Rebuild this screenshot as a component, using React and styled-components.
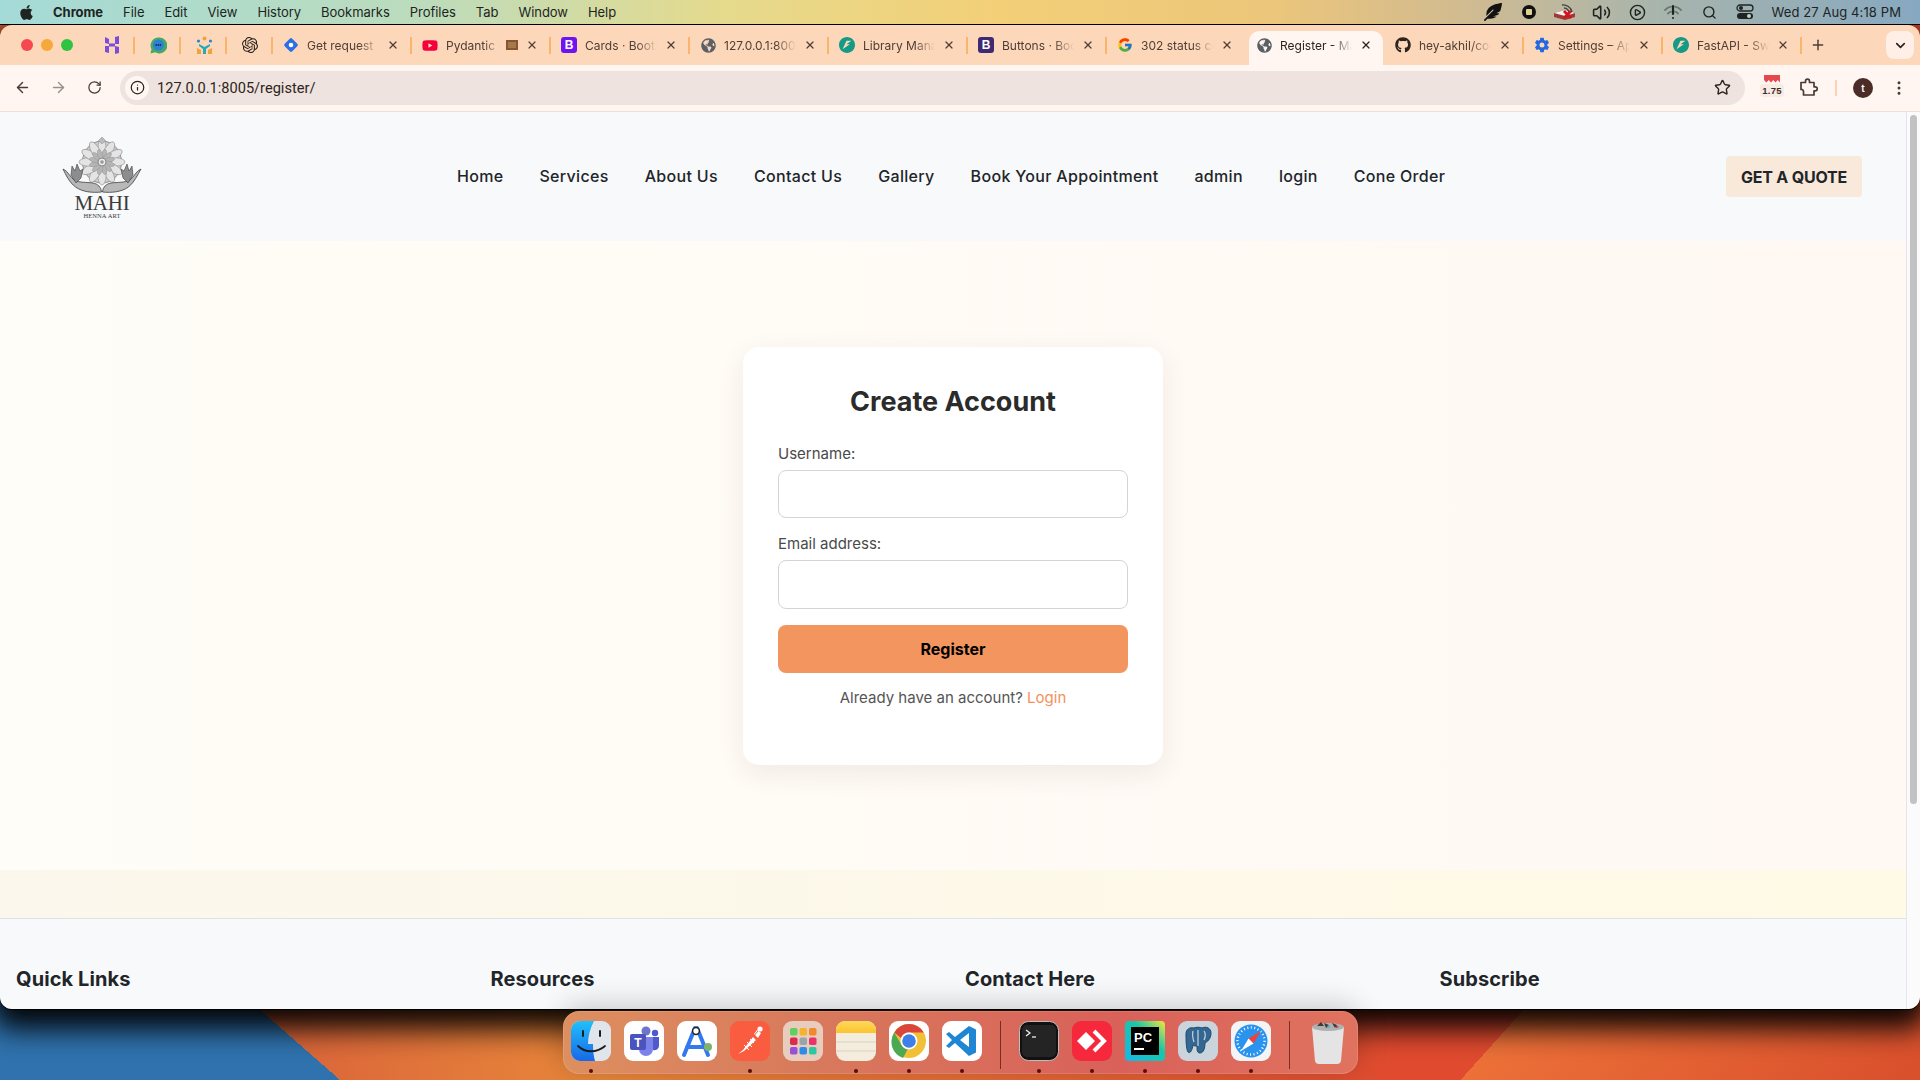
import styled, { createGlobalStyle } from "styled-components"
import { ArrowLeft, ArrowRight, RotateCw, Info, Star, EllipsisVertical, Plus, X, ChevronDown, Search, Volume2, CirclePlay } from "lucide-react"
import { FaApple, FaFeatherAlt, FaGithub, FaYoutube, FaGlobeAmericas } from "react-icons/fa"
import { FcGoogle } from "react-icons/fc"
import { IoSettingsSharp } from "react-icons/io5"
import { SiOpenai, SiFastapi } from "react-icons/si"

const GlobalStyle = createGlobalStyle`
    *{ box-sizing: border-box; }
    html, body{ margin: 0; padding: 0; overflow: hidden; }
    body{ font-family: "Inter", "Liberation Sans", sans-serif; }
`

const Screen = styled.div`
    width: 1920px;
    height: 1080px;
    display: flex;
    flex-direction: column;
    overflow: hidden;
    background:
        linear-gradient(41.2deg, #2f72ad 224px, transparent 224px),
        linear-gradient(132deg, transparent 1808px, #ec7038 1808px, #d94f2c 2149px),
        linear-gradient(90deg, #d9623a 260px, #e8873a 600px, #e04a2f 1400px);
`

/* mac menu bar */
const MenuBar = styled.div`
    height: 25px;
    flex: none;
    display: flex;
    align-items: center;
    gap: 20px;
    padding: 0 19px 0 18px;
    font-size: 13px;
    letter-spacing: -.04px;
    color: #1d2422;
    border-bottom: 1px solid #000;
    position: relative;
    z-index: 2;
    background: linear-gradient(90deg, #a4dad7 0%, #bcdcbc 22%, #e6da8c 38%, #f3cf78 52%, #ecc67a 66%, #d2bb90 76%, #a9b5ac 86%, #86a8c0 100%);
`

const MenuItem = styled.span`
    font-weight: ${p => p.$bold ? 700 : 400};
    margin-left: ${p => p.$bold ? "-2px" : "0"};
`

const StatusArea = styled.div`
    margin-left: auto;
    display: flex;
    align-items: center;
`

const StatusIcon = styled.span`
    width: 36px;
    display: flex;
    align-items: center;
    justify-content: center;
    color: #1d2422;
`

const Clock = styled.span`
    margin-left: 8px;
    letter-spacing: .1px;
`

/* browser window */
const Window = styled.div`
    height: 984px;
    flex: none;
    display: flex;
    flex-direction: column;
    overflow: hidden;
    border-radius: 12px;
    box-shadow: 0 1px 0 0 #000, 0 12px 28px 8px rgba(0,0,0,.95);
    position: relative;
`

const TabStrip = styled.div`
    height: 40px;
    flex: none;
    display: flex;
    align-items: flex-end;
    background: #fdd7b9;
`

const Lights = styled.div`
    width: 89px;
    height: 34px;
    flex: none;
    display: flex;
    align-items: center;
    gap: 8px;
    padding: 0 0 6px 21px;
`

const Light = styled.span`
    width: 12px;
    height: 12px;
    border-radius: 50%;
    background: ${p => p.$color};
`

const Tab = styled.div`
    width: ${p => p.$pinned ? "46px" : "139px"};
    height: 34px;
    flex: none;
    display: flex;
    align-items: center;
    justify-content: ${p => p.$pinned ? "center" : "flex-start"};
    padding: 0 0 6px ${p => p.$pinned ? "0" : "10px"};
    position: relative;
    font-size: 12px;
    color: #4e3e36;
    &::after{
        content: "";
        display: ${p => p.$sep ? "block" : "none"};
        position: absolute;
        right: 0;
        top: 6px;
        width: 2px;
        height: 17px;
        background: #fbb46e;
    }
`

const ActiveTab = styled(Tab)`
    color: #2b2320;
    &::before{
        content: "";
        position: absolute;
        left: 3px;
        right: 2px;
        top: 0;
        bottom: 0;
        background: #fff6f2;
        border-radius: 10px 10px 0 0;
    }
    > *{ position: relative; }
`

const Favicon = styled.span`
    width: 16px;
    height: 16px;
    flex: none;
    display: flex;
    align-items: center;
    justify-content: center;
    color: ${p => p.$color || "#5b5f66"};
`

const BootTile = styled.span`
    width: 16px;
    height: 16px;
    border-radius: 3px;
    display: flex;
    align-items: center;
    justify-content: center;
    background: ${p => p.$color};
    color: #fff;
    font: 700 12px "Liberation Sans", sans-serif;
`

const TabTitle = styled.span`
    margin-left: 8px;
    width: ${p => p.$short ? "54px" : "72px"};
    overflow: hidden;
    white-space: nowrap;
    mask-image: linear-gradient(90deg, #000 72%, transparent 100%);
`

const CloseBox = styled.span`
    position: absolute !important;
    left: 114px;
    top: 8px;
    display: flex;
`

const MediaMark = styled.span`
    width: 12px;
    height: 10px;
    margin-left: 6px;
    border: 2px solid #87562f;
    background: #a7774e;
    flex: none;
`

const NewTab = styled.div`
    width: 32px;
    height: 34px;
    flex: none;
    display: flex;
    align-items: center;
    justify-content: center;
    padding-bottom: 6px;
    color: #4e3e36;
`

const TabMenu = styled.div`
    width: 28px;
    height: 28px;
    margin: 0 6px 6px auto;
    border-radius: 8px;
    background: #ffefe6;
    display: flex;
    align-items: center;
    justify-content: center;
    color: #2b2320;
`

const Toolbar = styled.div`
    height: 47px;
    flex: none;
    display: flex;
    align-items: center;
    background: #fff6f2;
    border-bottom: 1px solid #f3dfd2;
    padding: 0 0 1px 4px;
    color: #4a3a33;
`

const NavIcon = styled.span`
    width: ${p => p.$w || 36}px;
    flex: none;
    display: flex;
    align-items: center;
    justify-content: center;
    color: ${p => p.$dim ? "#9a8f8a" : "inherit"};
`

const AddressBar = styled.div`
    width: 1625px;
    height: 34px;
    flex: none;
    margin-left: 8px;
    padding: 0 14px 0 5px;
    border-radius: 17px;
    background: #eee3de;
    display: flex;
    align-items: center;
    font-family: "Roboto", sans-serif;
    font-size: 14.6px;
    color: #2f2320;
`

const SiteInfo = styled.span`
    width: 24px;
    height: 24px;
    border-radius: 50%;
    background: #fff6f2;
    display: flex;
    align-items: center;
    justify-content: center;
    margin-right: 8px;
`

const StarBox = styled.span`
    margin-left: auto;
    display: flex;
`

const ExtBadge = styled.span`
    width: 26px;
    height: 26px;
    flex: none;
    margin-left: 14px;
    display: flex;
    flex-direction: column;
    align-items: center;
`

const ExtTop = styled.span`
    width: 16px;
    height: 8px;
    background: #e5484d;
    clip-path: polygon(0 0, 100% 0, 100% 100%, 86% 70%, 72% 100%, 58% 70%, 44% 100%, 30% 70%, 15% 100%, 0 70%);
`

const ExtLabel = styled.span`
    font: 700 9.5px "Liberation Sans", sans-serif;
    background: #f8ebe3;
    color: #3a2f2a;
    padding: 1px 2px;
    margin-top: 1px;
    border-radius: 3px;
    letter-spacing: .3px;
`

const ToolSep = styled.span`
    width: 2px;
    height: 16px;
    margin: 0 16px 0 4px;
    background: #fbd3b4;
    flex: none;
`

const Avatar = styled.span`
    width: 20px;
    height: 20px;
    border-radius: 50%;
    flex: none;
    background: #4b2c27;
    color: #fff;
    font-size: 10px;
    font-weight: 600;
    display: flex;
    align-items: center;
    justify-content: center;
`

/* page in the browser */
const Viewport = styled.div`
    flex: 1;
    min-height: 0;
    display: flex;
    overflow: hidden;
`

const Page = styled.div`
    flex: 1;
    min-width: 0;
    overflow: hidden;
    display: flex;
    flex-direction: column;
`

const Scrollbar = styled.div`
    width: 14px;
    flex: none;
    background: #fbfbfb;
    border-left: 1px solid #e3e6ea;
    padding: 3px 3px 0 3px;
`

const Thumb = styled.div`
    height: 689px;
    border-radius: 5px;
    background: #c2c2c2;
`

const Header = styled.header`
    height: 129px;
    flex: none;
    display: flex;
    align-items: center;
    background: #f8f9fb;
    padding: 0 44px 0 62px;
`

const LogoBox = styled.div`
    width: 80px;
    flex: none;
    display: flex;
    flex-direction: column;
    align-items: center;
    margin-top: 3px;
    color: #3b3b3b;
    font-family: "Liberation Serif", serif;
`

const LogoName = styled.span`
    font-size: 21px;
    line-height: 17px;
    margin-top: -2px;
    letter-spacing: -.2px;
`

const LogoSub = styled.span`
    font-size: 6.5px;
    line-height: 8px;
    letter-spacing: .1px;
`

const Nav = styled.nav`
    display: flex;
    gap: 36px;
    margin-left: 315px;
    margin-top: -1px;
`

const NavLink = styled.a`
    font-size: 16px;
    font-weight: 500;
    color: #212529;
    white-space: nowrap;
    letter-spacing: .32px;
`

const QuoteBtn = styled.button`
    margin-left: auto;
    width: 136px;
    height: 41px;
    border: 0;
    border-radius: 4px;
    background: #f9e9da;
    color: #212529;
    font-family: inherit;
    font-size: 16px;
    font-weight: 700;
    letter-spacing: -.2px;
`

const Main = styled.main`
    height: 629px;
    flex: none;
    display: flex;
    align-items: center;
    justify-content: center;
    background: linear-gradient(90deg, #fffdf7, #fff8f3);
`

const Card = styled.div`
    width: 420px;
    height: 418px;
    background: #fff;
    border-radius: 16px;
    padding: 35px;
    box-shadow: 0 8px 28px rgba(60,40,20,.08);
`

const Title = styled.h2`
    margin: 0 0 22px;
    height: 40px;
    line-height: 40px;
    text-align: center;
    font-size: 27px;
    font-weight: 700;
    color: #2b2b2b;
`

const Label = styled.label`
    display: block;
    height: 20px;
    line-height: 20px;
    margin-bottom: 6px;
    font-size: 15px;
    color: #4a4a4a;
`

const Input = styled.input`
    display: block;
    width: 100%;
    height: ${p => p.$h}px;
    margin-bottom: 16px;
    border: 1px solid #d4d4d4;
    border-radius: 8px;
    background: #fff;
    outline: none;
`

const SubmitBtn = styled.button`
    display: block;
    width: 100%;
    height: 48px;
    border: 0;
    border-radius: 8px;
    background: #f3955f;
    color: #000;
    font-family: inherit;
    font-size: 16px;
    font-weight: 700;
`

const Already = styled.p`
    margin: 15px 0 0;
    line-height: 20px;
    text-align: center;
    font-size: 15px;
    color: #555;
`

const LoginLink = styled.a`
    color: #f3915c;
`

const Band = styled.div`
    height: 48px;
    flex: none;
    background: linear-gradient(90deg, #fbf7ec, #fffae6);
`

const Footer = styled.footer`
    flex: 1;
    border-top: 1px solid #dee2e6;
    background: #f8f9fb;
    padding: 47px 0 0 16px;
    display: grid;
    grid-template-columns: repeat(4, 474.5px);
`

const FooterTitle = styled.h5`
    margin: 0;
    font-size: 20px;
    line-height: 26px;
    font-weight: 700;
    color: #212529;
    letter-spacing: .1px;
`

/* dock */
const DockRow = styled.div`
    flex: none;
    display: flex;
    justify-content: flex-start;
    padding: 2px 0 0 563px;
    position: relative;
`

const Dock = styled.div`
    height: 63px;
    display: flex;
    align-items: flex-start;
    gap: 13px;
    padding: 10px 10px 0 8px;
    border-radius: 16px;
    background: linear-gradient(90deg, #dd8f5f 0%, #d87a5c 30%, #d9615a 70%, #e0735f 100%);
    box-shadow: 0 -4px 30px rgba(0,0,0,.22), inset 0 0 0 1px rgba(255,255,255,.12);
`

const DockItem = styled.div`
    width: 40px;
    height: 40px;
    flex: none;
    position: relative;
    svg{ display: block; }
    &::after{
        content: "";
        display: ${p => p.$running ? "block" : "none"};
        position: absolute;
        left: 18px;
        bottom: -12px;
        width: 4px;
        height: 4px;
        border-radius: 50%;
        background: #5a0c06;
    }
`

const DockSep = styled.span`
    width: 1px;
    height: 48px;
    margin: 0 5px;
    flex: none;
    background: rgba(80,20,10,.7);
`

const menus = ["File", "Edit", "View", "History", "Bookmarks", "Profiles", "Tab", "Window", "Help"]
const links = ["Home", "Services", "About Us", "Contact Us", "Gallery", "Book Your Appointment", "admin", "login", "Cone Order"]
const footerCols = ["Quick Links", "Resources", "Contact Here", "Subscribe"]

function HostingerIcon(){
    return <svg width="16" height="18" viewBox="0 0 16 18" fill="#7b4dd8"><path d="M1 1l4 2v5l-4-1zM11 1l4-1v8h-4zM1 10h4v7l-4-1zM11 10l4 1v6l-4 1z"/><path d="M5 7.500h6v3H5z"/></svg>
}
function ChatIcon(){
    return <svg width="17" height="17" viewBox="0 0 17 17"><path d="M8.500 .5a8 8 0 0 0-7 11.800L.5 16.500l4.700-1.200A8 8 0 1 0 8.500 .5z" fill="#43a964"/><circle cx="8.500" cy="8" r="5.500" fill="#2f7fd6"/><path d="M5.500 8h6" stroke="#123" strokeWidth="1.600" strokeDasharray="1.400 .7"/></svg>
}
function TeamIcon(){
    return <svg width="17" height="18" viewBox="0 0 17 18"><circle cx="8.500" cy="2.500" r="2" fill="#f2a23c"/><circle cx="2.500" cy="5" r="1.600" fill="#2f7fd6"/><circle cx="14.500" cy="5" r="1.600" fill="#2f7fd6"/><path d="M3 8l5.500 3L14 8v2l-4 3v5H7v-5L3 10z" fill="#2aa7b8"/><path d="M1 12l4 2v4H1zM16 12l-4 2v4h4z" fill="#f2a23c"/></svg>
}
function DiamondIcon(){
    return <svg width="18" height="18" viewBox="0 0 18 18"><rect x="3" y="3" width="12" height="12" rx="2" transform="rotate(45 9 9)" fill="#2c6ee8"/><circle cx="9" cy="9" r="2.600" fill="#fff"/></svg>
}
function CircleFast(){
    return <SiFastapi size={16} color="#159a86"/>
}

function tabIcon(t){
    if(t === "diamond") return <DiamondIcon/>
    if(t === "yt") return <FaYoutube size={17} color="#f5003c"/>
    if(t === "b1") return <BootTile $color="#6f14f1">B</BootTile>
    if(t === "b2") return <BootTile $color="#3e2a73">B</BootTile>
    if(t === "fast") return <CircleFast/>
    if(t === "g") return <FcGoogle size={16}/>
    if(t === "gh") return <FaGithub size={16} color="#2b2320"/>
    if(t === "gear") return <IoSettingsSharp size={16} color="#2468e0"/>
    return <FaGlobeAmericas size={15}/>
}

const tabs = [
    { icon: "diamond", title: "Get request", sep: true },
    { icon: "yt", title: "Pydantic models", sep: true, media: true },
    { icon: "b1", title: "Cards · Bootstrap", sep: true },
    { icon: "globe", title: "127.0.0.1:8000/library", sep: true },
    { icon: "fast", title: "Library Management", sep: true },
    { icon: "b2", title: "Buttons · Bootstrap", sep: true },
    { icon: "g", title: "302 status code" },
    { icon: "globe", title: "Register - Mahi Henna", active: true },
    { icon: "gh", title: "hey-akhil/code", sep: true },
    { icon: "gear", title: "Settings – Appearance", sep: true },
    { icon: "fast", title: "FastAPI - Swagger UI", sep: true },
]

function BrowserTab({icon, title, sep, media, active}){
    const Box = active ? ActiveTab : Tab
    return(
        <Box $sep={sep}>
            <Favicon>{tabIcon(icon)}</Favicon>
            <TabTitle $short={media}>{title}</TabTitle>
            {media && <MediaMark/>}
            <CloseBox><X size={12} strokeWidth={2.4}/></CloseBox>
        </Box>
    )
}

function WifiOff(){
    return <svg width="20" height="16" viewBox="0 0 20 16" fill="none" stroke="#6b7670" strokeWidth="1.800" strokeLinecap="round"><path d="M2 6c2-2 4.500-3 6-3.300M18 6c-2-2-4.500-3-6-3.300M5 9.500c1-1 2-1.500 3-1.800M15 9.500c-1-1-2-1.500-3-1.800"/><path d="M10 2v8" stroke="#1d2422" strokeWidth="2.200"/><circle cx="10" cy="14" r="1" fill="#1d2422" stroke="none"/></svg>
}
function StopIcon(){
    return <svg width="14" height="14" viewBox="0 0 14 14"><circle cx="7" cy="7" r="7" fill="#111"/><rect x="4" y="4" width="6" height="6" rx="1" fill="#e0cf95"/></svg>
}
function DriveIcon(){
    return <svg width="24" height="18" viewBox="0 0 24 18"><path d="M1 10l11-3 10 3v4l-10 3-11-3z" fill="#a03a3a"/><path d="M1 10l11-3 10 3-10 3z" fill="#f2f2f2"/><path d="M9 2a9 9 0 0 1 10 7M11 5a5 5 0 0 1 5 5" stroke="#444" strokeWidth="1.400" fill="none"/><path d="M11 8l7 7M18 8l-7 7" stroke="#d3161c" strokeWidth="2.800"/></svg>
}
function ControlIcon(){
    return <svg width="18" height="16" viewBox="0 0 18 16"><rect x="1" y="1" width="16" height="6" rx="3" fill="none" stroke="#1d2422" strokeWidth="1.300"/><circle cx="5" cy="4" r="2" fill="#1d2422"/><rect x="1" y="9" width="16" height="6" rx="3" fill="#1d2422"/><circle cx="13" cy="12" r="2" fill="#c9cfc6"/></svg>
}
function ExtensionIcon(){
    return <svg width="19" height="19" viewBox="0 0 19 19" fill="none" stroke="#4a3a33" strokeWidth="1.700" strokeLinejoin="round"><path d="M2 4.500h4.500V3.200a2 2 0 0 1 4 0v1.300H15v4.300h1.300a2 2 0 0 1 0 4H15V17H4.500v-3.500a2 2 0 0 0-2.500-2z"/></svg>
}

function MandalaLogo(){
    const petals = [0,30,60,90,120,150,180,210,240,270,300,330]
    return(
        <svg width="80" height="60" viewBox="0 0 80 60" fill="none" stroke="#8a8a8a">
            <ellipse cx="40" cy="25" rx="19.500" ry="21" fill="#cfcfcf" stroke="#8f8f8f"/>
            {petals.map(a => <ellipse key={a} cx="40" cy="12" rx="4.200" ry="10" transform={`rotate(${a} 40 25)`} fill="#e4e4e4" strokeWidth=".6"/>)}
            {petals.map(a => <ellipse key={a} cx="40" cy="18" rx="2.400" ry="6" transform={`rotate(${a+15} 40 25)`} fill="#b5b5b5" strokeWidth=".4"/>)}
            <circle cx="40" cy="25" r="4" fill="#e8e8e8"/>
            <circle cx="40" cy="25" r="1.800" fill="#9a9a9a" stroke="none"/>
            <path d="M36.500 3.500L40 0l3.500 3.500L40 7z" fill="#bbb" strokeWidth=".5"/>
            <path d="M1 32c5 2 7 8 11 11 6 3 12 2 19 3 5 1 8 4 8.500 9-9 1-19 0-26-5C7 45 4 38 1 32z" fill="#b8b8b8" stroke="#3f3f3f" strokeWidth=".8"/>
            <path d="M79 32c-5 2-7 8-11 11-6 3-12 2-19 3-5 1-8 4-8.500 9 9 1 19 0 26-5 6-5 9-12 12.500-18z" fill="#b8b8b8" stroke="#3f3f3f" strokeWidth=".8"/>
            <path d="M9 38l1-9 3 5 2-7 3 7 3-2-2 9-5 5z" fill="#8d8d8d" stroke="#3f3f3f" strokeWidth=".6"/>
            <path d="M71 38l-1-9-3 5-2-7-3 7-3-2 2 9 5 5z" fill="#8d8d8d" stroke="#3f3f3f" strokeWidth=".6"/>
        </svg>
    )
}

function FinderIcon(){
    return <svg width="40" height="40" viewBox="0 0 40 40"><defs><linearGradient id="fb" x1="0" y1="0" x2="0" y2="1"><stop offset="0" stopColor="#1fc0fb"/><stop offset="1" stopColor="#1868e8"/></linearGradient></defs><rect width="40" height="40" rx="9" fill="#dfe5ea"/><path d="M9 0h14c-4 8-6 15-6 23h5c0 6 .5 12 2 17H9a9 9 0 0 1-9-9V9a9 9 0 0 1 9-9z" fill="url(#fb)"/><path d="M12 10v5M29 10v5" stroke="#1c1c1c" strokeWidth="2" strokeLinecap="round"/><path d="M7 25c7 7 19 7 27 0" stroke="#1c1c1c" strokeWidth="1.800" fill="none" strokeLinecap="round"/></svg>
}
function TeamsIcon(){
    return <svg width="40" height="40" viewBox="0 0 40 40"><rect width="40" height="40" rx="9" fill="#fff"/><circle cx="22" cy="10" r="4.500" fill="#6d75c8"/><circle cx="31" cy="12" r="3.200" fill="#5059c9"/><path d="M15 16h14v12a7 7 0 0 1-14 0z" fill="#7b83eb"/><path d="M29 16h6v9a4.500 4.500 0 0 1-6 4z" fill="#5059c9"/><rect x="6" y="13" width="16" height="16" rx="2" fill="#4b53bc"/><text x="14" y="25.500" textAnchor="middle" fontSize="12" fontWeight="700" fill="#fff" fontFamily="Liberation Sans">T</text></svg>
}
function StudioIcon(){
    return <svg width="40" height="40" viewBox="0 0 40 40"><rect width="40" height="40" rx="9" fill="#fff"/><path d="M18 7L7 34M20 7l11 27M10 26h20" stroke="#3478f0" strokeWidth="4" fill="none" strokeLinecap="round"/><circle cx="19" cy="10" r="3.400" fill="#fff" stroke="#222" strokeWidth="1.500"/><circle cx="31" cy="26" r="4" fill="#7cb46a"/></svg>
}
function PostmanIcon(){
    return <svg width="40" height="40" viewBox="0 0 40 40"><rect width="40" height="40" rx="9" fill="#f95c3e"/><path d="M8 33l5-4 10-13 3 3-12 11zM24 13l3-4 4 3-3 5z" fill="#fff"/><path d="M23 16l5-6" stroke="#f95c3e" strokeWidth="1"/><circle cx="30" cy="8" r="2.600" fill="#fff"/><path d="M14 24l5 5M17 21l5 5M20 18l4 4" stroke="#fff" strokeWidth="1"/></svg>
}
function LaunchIcon(){
    const colors = ["#5fcf5f","#f5b32d","#ee8a2a","#d92b4b","#9aa5a8","#e8336b","#9a4fd6","#2f8de8","#2ec8a0"]
    return(
        <svg width="40" height="40" viewBox="0 0 40 40">
            <rect width="40" height="40" rx="9" fill="#e8cdbf"/>
            {colors.map((c,i) => <rect key={c} x={7+(i%3)*9.5} y={7+Math.floor(i/3)*9.5} width="7.500" height="7.500" rx="1.800" fill={c}/>)}
        </svg>
    )
}
function NotesIcon(){
    return <svg width="40" height="40" viewBox="0 0 40 40"><defs><linearGradient id="ny" x1="0" y1="0" x2="0" y2="1"><stop offset="0" stopColor="#ffd95c"/><stop offset="1" stopColor="#fcc32e"/></linearGradient></defs><rect width="40" height="40" rx="9" fill="#f4ecdc"/><path d="M0 12V9a9 9 0 0 1 9-9h22a9 9 0 0 1 9 9v3z" fill="url(#ny)"/><path d="M0 21h40M0 30h40" stroke="#d9d2c2" strokeWidth="1"/></svg>
}
function ChromeIcon(){
    return <svg width="40" height="40" viewBox="0 0 40 40"><rect width="40" height="40" rx="9" fill="#fff"/><circle cx="20" cy="20" r="17" fill="#f2c037"/><path d="M20 3a17 17 0 0 1 14.700 8.500H20a8.500 8.500 0 0 0-8 5.500L5.300 11.500A17 17 0 0 1 20 3z" fill="#d9473c"/><path d="M5.300 11.500L12.500 24a8.500 8.500 0 0 0 6 4.500L14 37a17 17 0 0 1-8.700-25.500z" fill="#4da854"/><circle cx="20" cy="20" r="8.500" fill="#fff"/><circle cx="20" cy="20" r="6.800" fill="#3f7fe8"/></svg>
}
function VsCodeIcon(){
    return <svg width="40" height="40" viewBox="0 0 40 40"><rect width="40" height="40" rx="9" fill="#fff"/><path d="M27 5l7 3.500v23L27 35 13 22l-6 5-3-2 6-6-6-6 3-2 6 5z" fill="#1f86d4"/><path d="M27 12l-9 7 9 7z" fill="#fff"/></svg>
}
function TerminalIcon(){
    return <svg width="40" height="40" viewBox="0 0 40 40"><rect x=".5" y=".5" width="39" height="39" rx="9" fill="#111" stroke="#b9c0c4"/><rect x="3" y="4" width="34" height="32" rx="5" fill="#242424"/><path d="M7 9l4 3-4 3" stroke="#eee" strokeWidth="1.300" fill="none"/><path d="M13 16h4" stroke="#eee" strokeWidth="1.300"/></svg>
}
function AnyDeskIcon(){
    return <svg width="40" height="40" viewBox="0 0 40 40"><rect width="40" height="40" rx="9" fill="#f5283c"/><path d="M14 11l9 9-9 9-9-9z" fill="#fff"/><path d="M22 10l10 10-10 10" stroke="#fff" strokeWidth="4" fill="none"/></svg>
}
function PyCharmIcon(){
    return <svg width="40" height="40" viewBox="0 0 40 40"><defs><linearGradient id="pc" x1="0" y1="1" x2="1" y2="0"><stop offset="0" stopColor="#16b7e8"/><stop offset=".6" stopColor="#19c7a6"/><stop offset="1" stopColor="#f5e83b"/></linearGradient></defs><rect width="40" height="40" rx="4" fill="url(#pc)"/><rect x="6" y="6" width="28" height="28" fill="#000"/><text x="9" y="21" fontSize="13" fontWeight="700" fill="#fff" fontFamily="Liberation Sans">PC</text><rect x="9" y="27" width="10" height="2" fill="#fff"/></svg>
}
function PostgresIcon(){
    return <svg width="40" height="40" viewBox="0 0 40 40"><rect width="40" height="40" rx="9" fill="#c9d4dc"/><path d="M8 13c0-5 4-7 8-6 2-1 6-1 8 0 4-2 9 0 9 5 0 6-4 9-6 10 0 4-1 10-5 10-3 0-3-3-3-7-2 0-3 0-4-1-1 6-3 9-5 7-2-3-2-13-2-18z" fill="#336791" stroke="#1e4a6e"/><path d="M20 9v16M15 10c-1 4 0 8 1 11M26 10c2 3 1 7 0 9" stroke="#c9d4dc" strokeWidth="1.200" fill="none"/></svg>
}
function SafariIcon(){
    return <svg width="40" height="40" viewBox="0 0 40 40"><rect width="40" height="40" rx="9" fill="#f2f4f6"/><circle cx="20" cy="20" r="16.500" fill="#2a93ee"/><circle cx="20" cy="20" r="13.500" fill="none" stroke="#fff" strokeWidth="2.400" strokeDasharray="1 2.500"/><path d="M30 10L17.500 17.500 22.500 22.500z" fill="#f0413c"/><path d="M10 30l7.500-12.500 5 5z" fill="#fff"/></svg>
}
function TrashIcon(){
    return <svg width="40" height="44" viewBox="0 0 40 44"><path d="M4 6h32l-3 34a4 4 0 0 1-4 3H11a4 4 0 0 1-4-3z" fill="#e4e4e4"/><ellipse cx="20" cy="6" rx="16" ry="4" fill="#b0b0b0"/><path d="M9 5l4-4 3 4zM16 2l5 2-3 3zM24 2l5 2-2 3z" fill="#3a3a3a"/><path d="M20 4l3 2-4 1z" fill="#4bb3c8"/><path d="M28 4l3 2-3 1z" fill="#b33a3a"/></svg>
}

const dockLeft = [
    { Icon: FinderIcon, on: true }, { Icon: TeamsIcon }, { Icon: StudioIcon }, { Icon: PostmanIcon, on: true },
    { Icon: LaunchIcon }, { Icon: NotesIcon, on: true }, { Icon: ChromeIcon, on: true }, { Icon: VsCodeIcon, on: true },
]
const dockRight = [
    { Icon: TerminalIcon, on: true }, { Icon: AnyDeskIcon, on: true }, { Icon: PyCharmIcon, on: true },
    { Icon: PostgresIcon, on: true }, { Icon: SafariIcon, on: true },
]

export default function App(){
    return(
        <Screen>
            <GlobalStyle/>
            <MenuBar>
                <FaApple size={17}/>
                <MenuItem $bold>Chrome</MenuItem>
                {menus.map(m => <MenuItem key={m}>{m}</MenuItem>)}
                <StatusArea>
                    <StatusIcon><FaFeatherAlt size={18} color="#111"/></StatusIcon>
                    <StatusIcon><StopIcon/></StatusIcon>
                    <StatusIcon><DriveIcon/></StatusIcon>
                    <StatusIcon><Volume2 size={19}/></StatusIcon>
                    <StatusIcon><CirclePlay size={17}/></StatusIcon>
                    <StatusIcon><WifiOff/></StatusIcon>
                    <StatusIcon><Search size={15} strokeWidth={2.2}/></StatusIcon>
                    <StatusIcon><ControlIcon/></StatusIcon>
                    <Clock>Wed 27 Aug  4:18 PM</Clock>
                </StatusArea>
            </MenuBar>
            <Window>
                <TabStrip>
                    <Lights>
                        <Light $color="#f5484f"/>
                        <Light $color="#f6a83a"/>
                        <Light $color="#2cc441"/>
                    </Lights>
                    <Tab $pinned $sep><HostingerIcon/></Tab>
                    <Tab $pinned $sep><ChatIcon/></Tab>
                    <Tab $pinned $sep><TeamIcon/></Tab>
                    <Tab $pinned $sep><SiOpenai size={16} color="#2b2320"/></Tab>
                    {tabs.map(t => <BrowserTab key={t.title} {...t}/>)}
                    <NewTab><Plus size={16} strokeWidth={2.2}/></NewTab>
                    <TabMenu><ChevronDown size={15} strokeWidth={2.6}/></TabMenu>
                </TabStrip>
                <Toolbar>
                    <NavIcon $w={36}><ArrowLeft size={17}/></NavIcon>
                    <NavIcon $w={36} $dim><ArrowRight size={17}/></NavIcon>
                    <NavIcon $w={36}><RotateCw size={15}/></NavIcon>
                    <AddressBar>
                        <SiteInfo><Info size={15}/></SiteInfo>
                        127.0.0.1:8005/register/
                        <StarBox><Star size={17}/></StarBox>
                    </AddressBar>
                    <ExtBadge><ExtTop/><ExtLabel>1.75</ExtLabel></ExtBadge>
                    <NavIcon $w={46}><ExtensionIcon/></NavIcon>
                    <ToolSep/>
                    <Avatar>t</Avatar>
                    <NavIcon $w={52}><EllipsisVertical size={18}/></NavIcon>
                </Toolbar>
                <Viewport>
                    <Page>
                        <Header>
                            <LogoBox>
                                <MandalaLogo/>
                                <LogoName>MAHI</LogoName>
                                <LogoSub>HENNA ART</LogoSub>
                            </LogoBox>
                            <Nav>
                                {links.map(l => <NavLink key={l}>{l}</NavLink>)}
                            </Nav>
                            <QuoteBtn>GET A QUOTE</QuoteBtn>
                        </Header>
                        <Main>
                            <Card>
                                <Title>Create Account</Title>
                                <Label>Username:</Label>
                                <Input type="text" $h={48}/>
                                <Label>Email address:</Label>
                                <Input type="email" $h={49}/>
                                <SubmitBtn>Register</SubmitBtn>
                                <Already>Already have an account? <LoginLink>Login</LoginLink></Already>
                            </Card>
                        </Main>
                        <Band/>
                        <Footer>
                            {footerCols.map(c => <FooterTitle key={c}>{c}</FooterTitle>)}
                        </Footer>
                    </Page>
                    <Scrollbar><Thumb/></Scrollbar>
                </Viewport>
            </Window>
            <DockRow>
                <Dock>
                    {dockLeft.map(({Icon, on}, i) => <DockItem key={i} $running={on}><Icon/></DockItem>)}
                    <DockSep/>
                    {dockRight.map(({Icon, on}, i) => <DockItem key={i} $running={on}><Icon/></DockItem>)}
                    <DockSep/>
                    <DockItem><TrashIcon/></DockItem>
                </Dock>
            </DockRow>
        </Screen>
    )
}
